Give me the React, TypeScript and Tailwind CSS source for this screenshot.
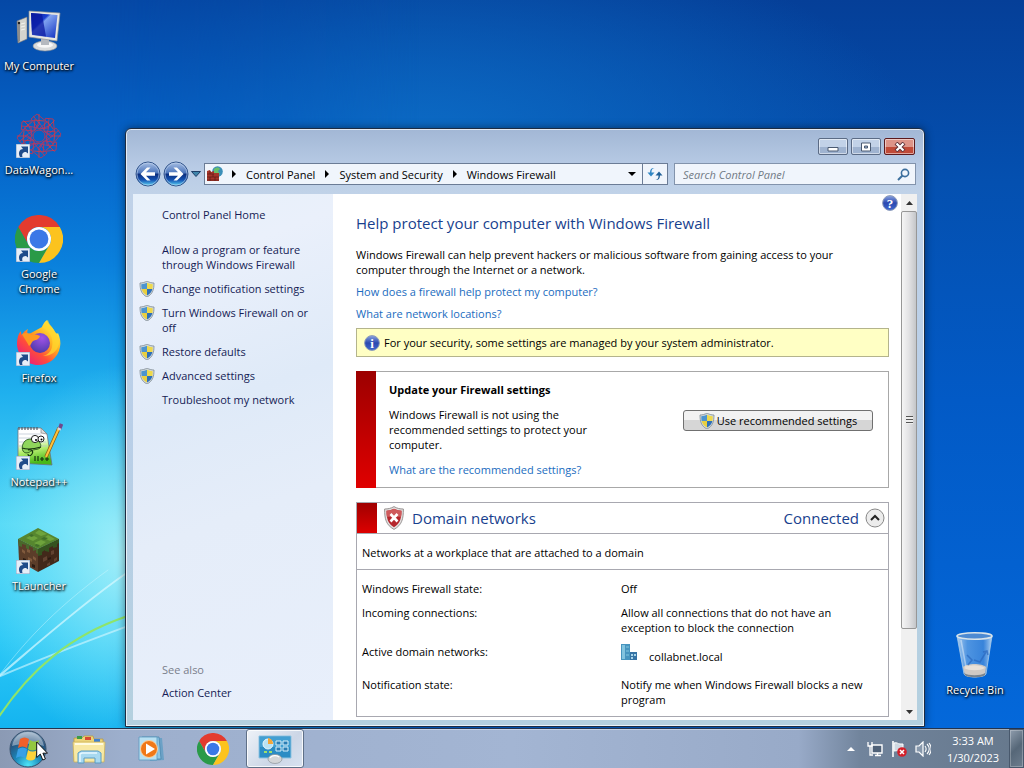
import type { ReactNode } from "react";

function ChromeIcon({ className }: { className?: string }) {
	return (
		<svg viewBox="0 0 48 48" className={className} aria-hidden="true">
			<path d="M3.2 12A24 24 0 0 1 44.8 12H24a12 12 0 0 0-10.4 18z" fill="#e33b2e" />
			<path d="M3.2 12a24 24 0 0 0 20.8 36l10.4-18a12 12 0 0 1-20.8 0z" fill="#2a9a48" />
			<path d="M24 48A24 24 0 0 0 44.8 12H24a12 12 0 0 1 10.4 18z" fill="#fcc31e" />
			<circle cx="24" cy="24" r="12" fill="#fff" />
			<circle cx="24" cy="24" r="9.4" fill="#3b78e7" />
		</svg>
	);
}

function ComputerIcon() {
	return (
		<svg viewBox="0 0 48 48" className="size-12" aria-hidden="true">
			<defs>
				<linearGradient id="screen" x1="0" y1="0" x2="1" y2="1">
					<stop offset="0" stopColor="#0a1f9c" />
					<stop offset=".36" stopColor="#1a3fd0" />
					<stop offset=".42" stopColor="#7fa2f0" />
					<stop offset="1" stopColor="#0f2fc0" />
				</linearGradient>
			</defs>
			<path d="M2 14l10-4v22l-9 4z" fill="#d4d4ce" stroke="#77777a" strokeWidth=".6" />
			<path d="M2 14l3 1v19l-2 2z" fill="#8d8d8c" />
			<circle cx="4" cy="16" r="1.200" fill="#222" />
			<path d="M6 17l4-1M6 20l4-1M6 23l4-1" stroke="#f4f4f0" />
			<ellipse cx="30" cy="39" rx="12" ry="5" fill="#d9dbdc" stroke="#888d92" strokeWidth=".6" />
			<ellipse cx="30" cy="38" rx="8" ry="2.800" fill="#f7f7f7" />
			<path d="M26 31l8 1v6h-8z" fill="#b5b9bf" />
			<path d="M14 4l31 2-3 28-28-4z" fill="#e8e8e2" stroke="#8d9096" strokeWidth=".7" />
			<path d="M16 6l26.500 2-2.500 23-23-3z" fill="url(#screen)" />
			<path d="M16 6l11 1 4 22.500-14-1.700z" fill="#0a18a0" opacity=".75" />
		</svg>
	);
}

function MeshIcon() {
	const angles = [0, 45, 90, 135, 180, 225, 270, 315];
	return (
		<svg viewBox="0 0 48 48" className="size-12" aria-hidden="true">
			<g fill="none" stroke="#c63450" strokeWidth=".8">
				{angles.map((a) => (
					<g key={a} transform={`rotate(${a} 24 25)`}>
						<path d="M24 18L16 8l6-5 10 8-8 7 9-1 1-10" />
						<path d="M24 3v9m-5-3l10 1" stroke="#e0383c" />
						<path d="M20 19l4-8 5 8" stroke="#a83a72" />
					</g>
				))}
				<circle cx="24" cy="25" r="6" />
			</g>
		</svg>
	);
}

function FirefoxIcon() {
	return (
		<svg viewBox="0 0 48 48" className="size-12" aria-hidden="true">
			<defs>
				<linearGradient id="fox" x1=".85" y1=".1" x2=".15" y2=".95">
					<stop offset="0" stopColor="#fff34a" />
					<stop offset=".35" stopColor="#ffae20" />
					<stop offset=".65" stopColor="#ff4d3a" />
					<stop offset="1" stopColor="#e81882" />
				</linearGradient>
				<radialGradient id="globe" cx=".6" cy=".25" r=".8">
					<stop offset="0" stopColor="#a052e8" />
					<stop offset="1" stopColor="#4a3aa8" />
				</radialGradient>
			</defs>
			<path
				d="M27 8c2-5 4-6 5-7 1 5 6 7 8 12 2 2 2 2 3 1 2 5 3 9 2 14-2 11-11 18-22 18S3 37 2 26c0-6 1-11 4-14 0 0 0 3 1 4 1-3 4-5 6-6-1 2-1 4 0 5 4-1 8-4 14-7z"
				fill="url(#fox)"
			/>
			<circle cx="25" cy="24" r="10" fill="url(#globe)" />
			<path d="M7 15c4-2 7-1 10 1 3-1 6 0 8 1-1 4-5 4-7 5-2 2-2 4-4 5-2-4-5-8-7-12z" fill="#ff9a20" />
			<path d="M27 8c8 4 12 11 10 20-1 5-5 8-9 9 8 0 14-4 16-12 0-6-2-9-4-12-2-5-6-7-7-12-3 2-4 5-6 7z" fill="#ffd72e" opacity=".75" />
		</svg>
	);
}

function NotepadIcon() {
	return (
		<svg viewBox="0 0 48 48" className="size-12" aria-hidden="true">
			<defs>
				<linearGradient id="sheet" x1="0" y1="0" x2=".2" y2="1">
					<stop offset=".4" stopColor="#fff" />
					<stop offset=".65" stopColor="#b8f070" />
					<stop offset="1" stopColor="#48b818" />
				</linearGradient>
			</defs>
			<path d="M3 5h23l6 6 5 31-34-2z" fill="url(#sheet)" stroke="#6a7480" strokeWidth=".8" />
			<path d="M26 5v5l6 1z" fill="#ddd" stroke="#777" strokeWidth=".6" />
			<path d="M4 4v3m3-3v3m3-3v3m3-3v3m3-3v3m3-3v3m3-3v3" stroke="#555e68" strokeWidth="1.200" />
			<path d="M4 11h22M4 15h26M4 19h27M4 23h28" stroke="#b8c2d0" strokeWidth=".7" />
			<path d="M8 21c2-5 7-6 12-4 5 1 7 5 5 8-2 2-6 1-9 3-2 2-6 3-8 0-1-2-1-5 0-7z" fill="#8fd65c" stroke="#1d4a14" strokeWidth=".8" />
			<circle cx="20" cy="16" r="3.600" fill="#fff" stroke="#222" />
			<circle cx="26" cy="16" r="3" fill="#fff" stroke="#222" />
			<circle cx="21" cy="17" r="1" />
			<circle cx="26.500" cy="16.500" r="1" />
			<path d="M7 25c6 2 12 1 19-1M13 27c3-1 6 1 4 4s-4 2-4 0M20 33v5m3-5v5m2-2h4m-2-2v4m3-2h4m-2-2v4" fill="none" stroke="#17350f" strokeWidth="1.200" />
			<path d="M44 5L31 34" stroke="#8a5a10" strokeWidth="3.400" />
			<path d="M44 5L31 34" stroke="#ffc23a" strokeWidth="2" />
			<path d="M46.500 1l-2 5" stroke="#70478c" strokeWidth="3.600" />
			<path d="M44.700 5l-1 2" stroke="#d8d8e0" strokeWidth="3.400" />
		</svg>
	);
}

function GrassBlockIcon() {
	return (
		<svg viewBox="0 0 48 48" className="size-12" aria-hidden="true">
			<path d="M3 12l20 10v23L4 34z" fill="#5b3d29" />
			<path d="M23 22l21-10v22L23 45z" fill="#42291a" />
			<path d="M23 1l21 11-21 10L3 12z" fill="#56862f" />
			<path d="M24 3l8 4-6 2-6-3zM33 8l7 4-5 2-6-3zM17 8l6 3-5 3-7-3zM26 13l5 2-6 4-6-3z" fill="#6ea33c" />
			<path d="M14 8l3-1 2 2-3 1zM29 10l4 1-3 2-4-1zM21 17l4 1-2 2-3-1z" fill="#41702a" />
			<path d="M3 12l20 10v5l-2-1v-3l-3 1v-3l-4-2v4l-3-2v-3l-4-1v3l-3-1z" fill="#49682c" />
			<path d="M23 22l21-10v4l-2 1v3l-4 1v-2l-4 2v4l-4-1v-1l-3 2v3l-4 1z" fill="#34531f" />
			<path d="M7 22l3 2v3l-3-2zM13 30l4 2v3l-4-2zM18 29l3 2v3l-3-2zM12 22l3 1v3l-3-1z" fill="#805a3d" />
			<path d="M28 31l4-2v4l-4 2zM36 24l3-1v4l-3 1zM39 32l3-2v3l-3 2zM32 37l3-2v3l-3 1z" fill="#624331" />
			<path d="M8 31l3 1v3l-3-1zM17 37l3 1v3l-3-1zM33 31l3-1v2l-3 1z" fill="#2c1b12" />
		</svg>
	);
}

function RecycleBinIcon() {
	return (
		<svg viewBox="0 0 48 48" className="size-12" aria-hidden="true">
			<defs>
				<linearGradient id="bin" x1="0" x2="1">
					<stop offset="0" stopColor="#c8dff4" stopOpacity=".85" />
					<stop offset=".3" stopColor="#6fa9e6" stopOpacity=".7" />
					<stop offset=".75" stopColor="#5b98de" stopOpacity=".6" />
					<stop offset="1" stopColor="#d4e8f8" stopOpacity=".85" />
				</linearGradient>
			</defs>
			<path d="M6 5h35l-6 38c-1 4-21 4-22 0z" fill="url(#bin)" stroke="#a9cbe8" strokeWidth=".8" />
			<path d="M12 36c4-4 19-4 23 0l-1 8c-3 3-18 3-20 0z" fill="#cfc9c4" />
			<path d="M13 37c5-4 17-3 21 0-5 3-16 3-21 0z" fill="#e8e0d8" />
			<path d="M13 42c4 3 17 3 21 0v2c-3 3-18 3-20 0z" fill="#77838f" />
			<ellipse cx="23.500" cy="5" rx="17.500" ry="3.200" fill="#4d8ad2" stroke="#d9e4ea" strokeWidth="1.600" />
			<path d="M16 24l5 5-4 5m6-5l6 2 6-10m-3 0l4-1 1 4" fill="none" stroke="#2a66bd" strokeWidth="1.500" opacity=".7" />
			<path d="M10 9l5 27" stroke="#fff" strokeWidth="1.500" opacity=".4" />
		</svg>
	);
}

function ShortcutArrow() {
	return (
		<svg viewBox="0 0 14 14" className="absolute bottom-px left-px size-3.5" aria-hidden="true">
			<path d="M0 0h14v14H0z" fill="#e7eef8" stroke="#8aa3c4" />
			<path d="M4 13C1.500 8.500 4 5 7 5L5 2.500h7v7L10 8c-3 0-4.500 1.500-3.500 5z" fill="#1f4b8a" />
		</svg>
	);
}

function UacShield({ className }: { className?: string }) {
	return (
		<svg viewBox="0 0 16 16" className={className} aria-hidden="true">
			<path d="M8 0c2 1.300 4.500 2 7 2 0 6-1 11-7 14C2 13 1 8 1 2c2.500 0 5-.7 7-2z" fill="#d3dadd" stroke="#7f8c94" strokeWidth=".8" />
			<path d="M8 1.800V8H2.600C2.300 6.300 2.300 5 2.300 3.200c2 0 4-.5 5.700-1.400z" fill="#4c94cf" />
			<path d="M8 1.800V8h5.400c.3-1.700.3-3 .3-4.800-2 0-4-.5-5.700-1.400z" fill="#eed94c" />
			<path d="M8 8v6.500C5 13 3.300 11 2.600 8z" fill="#e9cf3f" />
			<path d="M8 8v6.500c3-1.500 4.700-3.500 5.400-6.500z" fill="#2d6fb8" />
		</svg>
	);
}

function BlockedShield() {
	return (
		<svg viewBox="0 0 20 24" className="h-6 w-5 shrink-0" aria-hidden="true">
			<path d="M10 .6c3 1.800 6 2.400 9.400 2.400C19.400 13 18 19 10 23.400 2 19 .6 13 .6 3 4 3 7 2.400 10 .6z" fill="#e3e0df" stroke="#8f8a8a" strokeWidth=".9" />
			<path d="M10 2.800c2.400 1.300 5 1.900 7.500 2C17.400 13 16 17.500 10 21.200 4 17.500 2.600 13 2.500 4.800c2.500-.1 5.100-.7 7.500-2z" fill="#b5262c" />
			<path d="M10 2.800c2.400 1.300 5 1.900 7.500 2 0 3-.1 4-.5 6H3c-.4-2-.5-3-.5-6 2.500-.1 5.100-.7 7.500-2z" fill="#cf5a5c" />
			<path d="M6.500 8l7 7.500m0-7.500l-7 7.500" stroke="#fff" strokeWidth="2.600" />
		</svg>
	);
}

function RoundGlyph({ glyph, id }: { glyph: string; id: string }) {
	return (
		<svg viewBox="0 0 16 16" className="size-4 shrink-0" aria-hidden="true">
			<defs>
				<linearGradient id={id} x1="0" y1="0" x2="0" y2="1">
					<stop offset="0" stopColor="#8aa3e0" />
					<stop offset=".5" stopColor="#2b49b0" />
					<stop offset="1" stopColor="#3f68cf" />
				</linearGradient>
			</defs>
			<circle cx="8" cy="8" r="7.400" fill={`url(#${id})`} stroke="#8f9db8" />
			<text x="8" y="12.500" fontSize="13" fontWeight="700" textAnchor="middle" fill="#fff" className="font-['Liberation_Serif',serif]">
				{glyph}
			</text>
		</svg>
	);
}

function FirewallIcon() {
	return (
		<svg viewBox="0 0 16 16" className="size-4 shrink-0" aria-hidden="true">
			<circle cx="10.500" cy="5.500" r="5.300" fill="#3b8fb8" />
			<path d="M7 3c2-2 5-2 6 0l-2 2 2 3-3 2-3-3z" fill="#69bf6a" />
			<path d="M0 5l3-1 1 2 3-1v2h5v8H0z" fill="#a5352a" />
			<path d="M0 8h7m-7 3h12M3 5v3m3 0v3m-3 0v4m5-4v4m-8-1h12" stroke="#5c1a15" strokeWidth=".7" />
		</svg>
	);
}

function NavCircle({ flip }: { flip?: boolean }) {
	const id = flip ? "navForward" : "navBack";
	return (
		<svg viewBox="0 0 26 26" className="size-[26px]" aria-hidden="true">
			<defs>
				<linearGradient id={id} x1="0" y1="0" x2="0" y2="1">
					<stop offset="0" stopColor="#a9c0e4" />
					<stop offset=".46" stopColor="#4c76bc" />
					<stop offset=".5" stopColor="#0c2d7c" />
					<stop offset=".75" stopColor="#1554b4" />
					<stop offset="1" stopColor="#5fdcf8" />
				</linearGradient>
			</defs>
			<circle cx="13" cy="13" r="12" fill={`url(#${id})`} stroke="#33558c" />
			<circle cx="13" cy="13" r="11" fill="none" stroke="#c3d6ee" strokeWidth=".8" opacity=".7" />
			<path
				d={flip ? "M20.500 13l-6.500 6.500h-3.500l4.500-4.700H6v-3.600h9L10.500 6.500H14z" : "M5.500 13L12 6.500h3.500L11 11.200h9v3.600h-9l4.500 4.700H12z"}
				fill="#fff"
			/>
		</svg>
	);
}

function BuildingIcon() {
	return (
		<svg viewBox="0 0 16 16" className="size-4 shrink-0" aria-hidden="true">
			<path d="M0 0h9v16H0z" fill="#4795bf" />
			<path d="M1 1h3v14H1z" fill="#83c4de" />
			<path d="M5 2h3v2H5zm0 4h3v2H5zm0 4h3v2H5z" fill="#64aecf" />
			<path d="M9 8h7v8H9z" fill="#3673a5" />
			<path d="M10 10h2v2h-2zm3 0h2v2h-2zm-3 3h2v2h-2z" fill="#a7d4e8" />
		</svg>
	);
}

function StartOrb() {
	return (
		<svg viewBox="0 0 38 38" className="size-[38px]" aria-hidden="true">
			<defs>
				<radialGradient id="orb" cx=".5" cy=".95" r=".95">
					<stop offset="0" stopColor="#4fe6f8" />
					<stop offset=".4" stopColor="#1b86b8" />
					<stop offset=".75" stopColor="#27537e" />
					<stop offset="1" stopColor="#8ba6c0" />
				</radialGradient>
			</defs>
			<circle cx="19" cy="19" r="18" fill="url(#orb)" stroke="#36516d" />
			<path d="M3 16C5 6 12 2 19 2s14 4 16 14c-10-3-22-3-32 0z" fill="#fff" opacity=".4" />
			<path d="M11 9c3-2 6-2 9 0l-2 9c-3-2-6-2-9 0z" fill="#f0602a" />
			<path d="M21 10c3 2 6 2 9 0l-2 9c-3 2-6 2-9 0z" fill="#93c83e" />
			<path d="M9 19c3-2 6-2 9 0l-2 9c-3-2-6-2-9 0z" fill="#38a0e6" />
			<path d="M19 20c3 2 6 2 9 0l-2 9c-3 2-6 2-9 0z" fill="#fdd33a" />
		</svg>
	);
}

function ExplorerIcon() {
	return (
		<svg viewBox="0 0 34 30" className="h-[30px] w-[34px]" aria-hidden="true">
			<path d="M2 4h8l2-2h9l1 3h9v22H2z" fill="#ecd479" stroke="#b99b45" strokeWidth=".8" />
			<path d="M5 2h5v3H5z" fill="#3c9c48" />
			<path d="M13 3h6v3h-6z" fill="#d84a34" />
			<path d="M22 5h6v3h-6z" fill="#3f80d0" />
			<path d="M1 8h32l-1 20H2z" fill="#f8e9a4" stroke="#cdb25c" strokeWidth=".8" />
			<path d="M3 10h28" stroke="#fffbe0" strokeWidth="2" />
			<path d="M6 29V19l3-2h17l3 2v10h-6v-5H12v5z" fill="#a8d9f0" stroke="#5b9cc4" />
			<path d="M8 28v-8l2-1h15" fill="none" stroke="#e6f7ff" strokeWidth="1.500" />
		</svg>
	);
}

function MediaPlayerIcon() {
	return (
		<svg viewBox="0 0 30 28" className="h-7 w-[30px]" aria-hidden="true">
			<path d="M10 3h16l2 22-14 1z" fill="#5f9ec4" opacity=".8" />
			<path d="M6 2h17l2 22H8z" fill="#8fc6e4" stroke="#4d88ae" strokeWidth=".8" />
			<path d="M3 2h18v23H3z" fill="#b8e0f2" stroke="#5b9abf" strokeWidth=".8" />
			<circle cx="13" cy="14" r="8.500" fill="#f07818" stroke="#fbd2a0" />
			<path d="M10 8.500l9 5.500-9 5.500z" fill="#fff" />
		</svg>
	);
}

function ControlPanelIcon() {
	return (
		<svg viewBox="0 0 34 30" className="h-[30px] w-[34px]" aria-hidden="true">
			<path d="M1 2h32v22H1z" fill="#2b8cc4" stroke="#8ec4e2" />
			<path d="M2 3h30v10H2z" fill="#429fd2" />
			<circle cx="10" cy="10" r="5" fill="#b9e2f4" stroke="#e8f8ff" />
			<path d="M10 10V4a6 6 0 0 1 5 6z" fill="#f3a63a" />
			<path d="M18 7h5v4h-5zm7 0h5v4h-5zm-7 6h5v4h-5zm7 0h5v4h-5z" fill="#2a7db4" stroke="#d7f0fb" />
			<path d="M6 18h3m2 0h3" stroke="#9fe06a" strokeWidth="2" />
			<ellipse cx="17" cy="25" rx="7" ry="4.500" fill="#d3d6d8" stroke="#8b9298" strokeWidth=".7" />
			<path d="M12 24c2-3 7-3 9-1" fill="none" stroke="#fff" strokeWidth="1.300" />
		</svg>
	);
}

const shortcuts: { name: string; icon: ReactNode; linked: boolean }[] = [
	{ name: "My Computer", icon: <ComputerIcon />, linked: false },
	{ name: "DataWagon...", icon: <MeshIcon />, linked: true },
	{ name: "Google Chrome", icon: <ChromeIcon className="size-12" />, linked: true },
	{ name: "Firefox", icon: <FirefoxIcon />, linked: true },
	{ name: "Notepad++", icon: <NotepadIcon />, linked: true },
	{ name: "TLauncher", icon: <GrassBlockIcon />, linked: true },
];

const tasks = [
	{ label: "Allow a program or feature through Windows Firewall", shield: false },
	{ label: "Change notification settings", shield: true },
	{ label: "Turn Windows Firewall on or off", shield: true },
	{ label: "Restore defaults", shield: true },
	{ label: "Advanced settings", shield: true },
	{ label: "Troubleshoot my network", shield: false },
];

const crumbs = ["Control Panel", "System and Security", "Windows Firewall"];

function Wallpaper() {
	return (
		<div className="absolute inset-0 overflow-hidden bg-[radial-gradient(ellipse_50%_30%_at_40%_20%,#0c6cc6_0%,transparent_100%),linear-gradient(180deg,#053f98_0%,#0450b0_25%,#025ac6_55%,#0468da_100%)]">
			<div className="absolute inset-y-0 left-0 w-[420px] bg-[linear-gradient(180deg,#0548a6_0%,#0563c8_20%,#0a80dc_36%,#1fb0ee_54%,#52d8f6_72%,#2cc8f6_88%,#14b4f0_100%)] mask-r-from-25% mask-r-to-100%" />
			<svg viewBox="0 0 126 728" className="absolute bottom-0 left-0 h-[728px] w-[126px]" aria-hidden="true">
				<defs>
					<radialGradient id="glow">
						<stop offset="0" stopColor="#b4f4fa" stopOpacity=".85" />
						<stop offset="1" stopColor="#8ceefa" stopOpacity="0" />
					</radialGradient>
				</defs>
				<ellipse cx="126" cy="555" rx="150" ry="190" fill="url(#glow)" />
				<g fill="none" strokeLinecap="round">
					<path d="M-2 677C30 650 80 605 128 572" stroke="#d9f9ff" strokeWidth="2" opacity=".7" />
					<path d="M-2 677C20 648 50 612 108 570" stroke="#d9f9ff" opacity=".4" />
					<path d="M-2 677C50 655 90 640 128 626" stroke="#d9f9ff" strokeWidth="2" opacity=".6" />
					<path d="M-2 718C30 670 70 635 128 616" stroke="#8fe46a" strokeWidth="2" />
				</g>
			</svg>
		</div>
	);
}

function DesktopItem({ name, icon, linked }: { name: string; icon: ReactNode; linked: boolean }) {
	return (
		<button
			type="button"
			className="flex h-[104px] w-[78px] flex-col items-center gap-[3px] pt-[7px] text-center leading-[15px] text-white [text-shadow:1px_1px_2px_#000,0_1px_3px_#000]"
		>
			<span className="relative">
				{icon}
				{linked && <ShortcutArrow />}
			</span>
			<span>{name}</span>
		</button>
	);
}

function TitleBar() {
	const base = "flex h-[17px] items-center justify-center rounded-[2px] border shadow-[inset_0_0_0_1px_rgba(255,255,255,.5)]";
	return (
		<div className="flex h-[33px] items-start justify-end gap-[3px] pt-[9px] pr-0.5">
			<button type="button" aria-label="Minimize" className={`${base} w-[30px] border-[#5b6b85] bg-[linear-gradient(#c2d2e8_50%,#9fb3d0_50%)]`}>
				<svg viewBox="0 0 12 10" className="h-2.5 w-3" aria-hidden="true">
					<path d="M1 5.500h10v3.500H1z" fill="#fff" stroke="#4a5a72" />
				</svg>
			</button>
			<button type="button" aria-label="Maximize" className={`${base} w-[30px] border-[#5b6b85] bg-[linear-gradient(#c2d2e8_50%,#9fb3d0_50%)]`}>
				<svg viewBox="0 0 12 10" className="h-2.5 w-3" aria-hidden="true">
					<path d="M1.500 1h9v8h-9z" fill="#fff" stroke="#4a5a72" />
					<path d="M4.500 4h3v2h-3z" fill="#9fb3d0" stroke="#4a5a72" />
				</svg>
			</button>
			<button type="button" aria-label="Close" className={`${base} w-[31px] border-[#5c1a1e] bg-[linear-gradient(#dd9488_50%,#c04a38_50%)]`}>
				<svg viewBox="0 0 12 10" className="h-2.5 w-3" aria-hidden="true">
					<path d="M2 1l8 8m0-8L2 9" stroke="#5d3238" strokeWidth="4" />
					<path d="M2.500 1.500l7 7m0-7l-7 7" stroke="#fff" strokeWidth="2.200" />
				</svg>
			</button>
		</div>
	);
}

function AddressRow() {
	return (
		<div className="flex h-8 items-start pt-px pr-px">
			<div className="-mt-0.5 mr-[3px] flex items-center gap-0.5 pl-0.5">
				<button type="button" aria-label="Back">
					<NavCircle />
				</button>
				<button type="button" aria-label="Forward">
					<NavCircle flip />
				</button>
				<button type="button" aria-label="Recent pages">
					<svg viewBox="0 0 10 6" className="h-1.5 w-2.5" aria-hidden="true">
						<path d="M.5.5h9L5 5.500z" fill="#3f86ac" stroke="#1f3f68" />
					</svg>
				</button>
			</div>
			<div className="flex h-[22px] min-w-0 flex-1 border border-[#6b7c96] bg-[#f0f5fc]">
				<nav className="flex min-w-0 flex-1 items-center pl-0.5">
					<FirewallIcon />
					{crumbs.map((crumb) => (
						<span key={crumb} className="flex items-center whitespace-nowrap">
							<svg viewBox="0 0 4 8" className="mr-2.5 ml-[9px] h-2 w-1" aria-hidden="true">
								<path d="M0 0l4 4-4 4z" fill="#000" />
							</svg>
							<a href="#crumb" className="pr-px">
								{crumb}
							</a>
						</span>
					))}
				</nav>
				<button type="button" aria-label="Previous locations" className="w-5 border-r border-[#6b7c96] pl-[5px]">
					<svg viewBox="0 0 8 4" className="h-1 w-2" aria-hidden="true">
						<path d="M0 0h8L4 4z" fill="#000" />
					</svg>
				</button>
				<button type="button" aria-label="Refresh" className="flex w-6 items-center justify-center">
					<svg viewBox="0 0 16 14" className="h-3.5 w-4" aria-hidden="true">
						<path d="M7.500 1C5 1.500 4.500 3 4.500 5.500H7.500L4 9.500.5 5.500H3C3 2.500 4.500.5 7.500 1z" fill="#2f86c4" />
						<path d="M8.500 13c2.500-.5 3-2 3-4.500H8.500L12 4.500l3.500 4H13c0 3-1.500 5-4.500 4.500z" fill="#1f6098" />
					</svg>
				</button>
			</div>
			<div className="ml-1.5 flex h-[22px] w-[242px] items-center border border-[#8293ac] bg-[#f0f5fc] pr-[5px]">
				<input
					type="search"
					aria-label="Search Control Panel"
					placeholder="Search Control Panel"
					className="min-w-0 flex-1 bg-transparent pl-2 outline-none placeholder:text-[#727b86] placeholder:italic"
				/>
				<svg viewBox="0 0 13 13" className="size-[13px]" aria-hidden="true">
					<circle cx="8" cy="5" r="3.600" fill="none" stroke="#3c6f9e" strokeWidth="1.600" />
					<path d="M5.500 7.500L1 12" stroke="#3c6f9e" strokeWidth="2" />
				</svg>
			</div>
		</div>
	);
}

function Sidebar() {
	return (
		<aside className="flex w-[200px] shrink-0 flex-col bg-[linear-gradient(160deg,#e6f0fa_0%,#eaf0fb_15%,#dfeaf8_40%,#e5edf9_60%,#e8effb_100%)] pt-[13px] pr-3 pb-5 pl-[29px] text-[#151c55]">
			<a href="#home">Control Panel Home</a>
			<ul className="mt-5 flex flex-col gap-[9px]">
				{tasks.map((task) => (
					<li key={task.label} className="relative">
						{task.shield && <UacShield className="absolute top-0 -left-[23px] size-4" />}
						<a href="#task">{task.label}</a>
					</li>
				))}
			</ul>
			<span className="mt-auto text-[#7a7f8c]">See also</span>
			<a href="#action-center" className="mt-2">
				Action Center
			</a>
		</aside>
	);
}

function UpdatePanel() {
	return (
		<section className="mt-3.5 flex border border-[#a8a8a8] bg-white">
			<div className="-my-px -ml-px w-5 shrink-0 bg-[linear-gradient(#9c0000,#e00000)]" />
			<div className="w-[232px] py-2.5 pl-[13px]">
				<h2 className="font-bold">Update your Firewall settings</h2>
				<p className="mt-2.5">Windows Firewall is not using the recommended settings to protect your computer.</p>
				<a href="#recommended" className="mt-2.5 block text-[#1a6cc0]">
					What are the recommended settings?
				</a>
			</div>
			<button
				type="button"
				className="mt-[38px] mr-[15px] ml-auto flex h-[21px] w-[190px] items-center justify-center rounded-[3px] border border-[#707070] bg-[linear-gradient(#f2f2f2_50%,#d6d6d6_50%)]"
			>
				<UacShield className="mr-0.5 size-4" />
				Use recommended settings
			</button>
		</section>
	);
}

function DomainPanel() {
	return (
		<section className="mt-3.5 border border-[#a8a8b0]">
			<div className="flex h-[31px] items-center border-b border-[#a8a8b0] pr-[3px] text-[15px]">
				<div className="w-5 self-stretch bg-[linear-gradient(#a00000,#dd0000)]" />
				<div className="flex items-center gap-2 pl-[7px]">
					<BlockedShield />
					<h2 className="text-[#183f8e]">Domain networks</h2>
				</div>
				<span className="mr-1.5 ml-auto text-[#183f8e]">Connected</span>
				<button type="button" aria-label="Collapse" className="rounded-full">
					<svg viewBox="0 0 20 20" className="size-5" aria-hidden="true">
						<circle cx="10" cy="10" r="9" fill="#ececec" stroke="#888" />
						<path d="M6 12l4-4 4 4" fill="none" stroke="#222" strokeWidth="2" />
					</svg>
				</button>
			</div>
			<p className="border-b border-[#a8a8b0] px-[5px] pt-[11px] pb-[9px]">Networks at a workplace that are attached to a domain</p>
			<dl className="grid grid-cols-[259px_1fr] gap-y-[9px] px-[5px] pt-[11px] pb-[9px]">
				<dt>Windows Firewall state:</dt>
				<dd>Off</dd>
				<dt>Incoming connections:</dt>
				<dd>Allow all connections that do not have an exception to block the connection</dd>
				<dt>Active domain networks:</dt>
				<dd className="flex h-6 gap-3">
					<BuildingIcon />
					<span className="self-center">collabnet.local</span>
				</dd>
				<dt>Notification state:</dt>
				<dd>Notify me when Windows Firewall blocks a new program</dd>
			</dl>
		</section>
	);
}

function ScrollRail() {
	return (
		<div className="flex w-4 shrink-0 flex-col items-center bg-[#f0f0f0]" aria-hidden="true">
			<span className="flex h-[17px] items-center">
				<svg viewBox="0 0 7 4" className="h-1 w-[7px]">
					<path d="M0 4h7L3.500 0z" fill="#333" />
				</svg>
			</span>
			<span className="flex flex-[418] items-center justify-center self-stretch rounded-[2px] border border-[#979797] bg-[linear-gradient(90deg,#f5f5f5,#e2e2e4_50%,#c4c6c9)]">
				<span className="h-2 w-[7px] bg-[repeating-linear-gradient(#555_0_1px,#eee_1px_3px)]" />
			</span>
			<span className="flex-[74]" />
			<span className="flex h-[17px] items-center">
				<svg viewBox="0 0 7 4" className="h-1 w-[7px]">
					<path d="M0 0h7L3.500 4z" fill="#333" />
				</svg>
			</span>
		</div>
	);
}

function FirewallWindow() {
	return (
		<div className="absolute top-[128px] right-[99px] bottom-px left-[125px] flex flex-col rounded-t-md border border-[#1d2c42] bg-[linear-gradient(180deg,#a2b7d5_0,#b9cce6_40px,#c0d2e8_64px,#b9cfe8_50%,#b4d0df_100%)] px-[7px] pb-1.5 shadow-[inset_0_0_0_1px_rgba(255,255,255,.7),0_0_8px_rgba(0,0,0,.45)]">
			<TitleBar />
			<AddressRow />
			<div className="flex min-h-0 flex-1 bg-white">
				<Sidebar />
				<main className="relative min-w-0 flex-1 overflow-hidden pt-[19px] pr-3 pl-[23px]">
					<button type="button" aria-label="Help" className="absolute top-px right-[3px]">
						<RoundGlyph glyph="?" id="help" />
					</button>
					<h1 className="text-[15px] leading-5 text-[#183f8e]">Help protect your computer with Windows Firewall</h1>
					<p className="mt-3.5 pr-6">
						Windows Firewall can help prevent hackers or malicious software from gaining access to your computer through the Internet or a network.
					</p>
					<a href="#how" className="mt-[7px] block text-[#1a6cc0]">
						How does a firewall help protect my computer?
					</a>
					<a href="#locations" className="mt-[7px] block text-[#1a6cc0]">
						What are network locations?
					</a>
					<div className="mt-[7px] flex h-[29px] items-center gap-1 border border-[#b4b48c] bg-[#ffffc4] pl-[7px]">
						<RoundGlyph glyph="i" id="info" />
						For your security, some settings are managed by your system administrator.
					</div>
					<UpdatePanel />
					<DomainPanel />
				</main>
				<ScrollRail />
			</div>
		</div>
	);
}

function Taskbar() {
	return (
		<footer className="relative flex h-10 shrink-0 items-stretch border-t border-[#23344f] bg-[linear-gradient(90deg,#8b9ab4_0%,#9dafcd_12%,#a3b5d3_50%,#98aac8_78%,#71849c_84%,#66788c_100%)] text-white shadow-[inset_0_1px_0_rgba(255,255,255,.4)]">
			<button type="button" aria-label="Start" className="flex w-[60px] items-center pl-[9px]">
				<StartOrb />
			</button>
			<div className="flex gap-1">
				<button type="button" aria-label="Windows Explorer" className="flex w-[58px] items-center justify-center">
					<ExplorerIcon />
				</button>
				<button type="button" aria-label="Windows Media Player" className="flex w-[58px] items-center justify-center">
					<MediaPlayerIcon />
				</button>
				<button type="button" aria-label="Google Chrome" className="flex w-[58px] items-center justify-center">
					<ChromeIcon className="size-8" />
				</button>
				<button
					type="button"
					aria-label="Windows Firewall"
					className="flex w-[58px] items-center justify-center rounded-[3px] border border-[#5f7088] bg-[linear-gradient(135deg,#eef2f8,#ccd6e6_60%,#d8e2f0)] shadow-[inset_0_0_0_1px_rgba(255,255,255,.8)]"
				>
					<ControlPanelIcon />
				</button>
			</div>
			<div className="ml-auto flex items-center">
				<button type="button" aria-label="Show hidden icons" className="mr-2.5 w-3">
					<svg viewBox="0 0 8 4" className="mx-auto h-1 w-2" aria-hidden="true">
						<path d="M0 4h8L4 0z" fill="#fff" />
					</svg>
				</button>
				<div className="mr-1.5 flex gap-2">
					<svg viewBox="0 0 16 16" className="size-4" aria-label="Network">
						<path d="M5 4h10v8H5zM8 14.500h6M10.500 12v2" fill="#4f6178" stroke="#fff" strokeWidth="1.400" />
						<path d="M1 1v4h4V1M3 5v9h3" fill="none" stroke="#fff" strokeWidth="1.300" />
					</svg>
					<svg viewBox="0 0 16 16" className="size-4" aria-label="Action Center">
						<path d="M2 0v16" stroke="#fff" strokeWidth="1.600" />
						<path d="M3 2c3-1 4 1 6 1h3v7c-3 1-5-1-9 0z" fill="#cfd8e2" stroke="#fff" />
						<circle cx="11" cy="11" r="4.800" fill="#d3202a" />
						<path d="M9 9l4 4m0-4l-4 4" stroke="#fff" strokeWidth="1.500" />
					</svg>
					<svg viewBox="0 0 16 16" className="size-4" aria-label="Volume">
						<path d="M1 5h3l4-4v14l-4-4H1z" fill="#8798ac" stroke="#fff" strokeWidth="1.200" />
						<path d="M10 5c1.500 2 1.500 4 0 6m2-8c3 3 3 7 0 10m2-11c3 4 3 8 0 12" fill="none" stroke="#fff" strokeWidth="1.100" />
					</svg>
				</div>
				<div className="w-[72px] text-center leading-[17px]">
					<time className="block">3:33 AM</time>
					<time className="block">1/30/2023</time>
				</div>
				<button
					type="button"
					aria-label="Show desktop"
					className="h-full w-[15px] border border-[#48586c] bg-[linear-gradient(135deg,#8f9dad,#566778_50%,#6d7d8e)] shadow-[inset_0_0_0_1px_rgba(255,255,255,.25)]"
				/>
			</div>
			<svg viewBox="0 0 12 20" className="pointer-events-none absolute top-3 left-9 h-5 w-3" aria-hidden="true">
				<path d="M.7 1v15.500l3.600-3.400 2.500 5.900 2.600-1.100-2.500-5.700h4.600z" fill="#fff" stroke="#111" />
			</svg>
		</footer>
	);
}

export default function App() {
	return (
		<div className="flex h-screen flex-col overflow-hidden font-['Open_Sans',sans-serif] text-[11px] leading-[15px] text-black">
			<div className="relative min-h-0 flex-1">
				<Wallpaper />
				<div className="relative flex h-full justify-between">
					<div className="flex flex-col">
						{shortcuts.map((shortcut) => (
							<DesktopItem key={shortcut.name} {...shortcut} />
						))}
					</div>
					<div className="flex flex-col justify-end pr-2.5">
						<DesktopItem name="Recycle Bin" icon={<RecycleBinIcon />} linked={false} />
					</div>
				</div>
				<FirewallWindow />
			</div>
			<Taskbar />
		</div>
	);
}
